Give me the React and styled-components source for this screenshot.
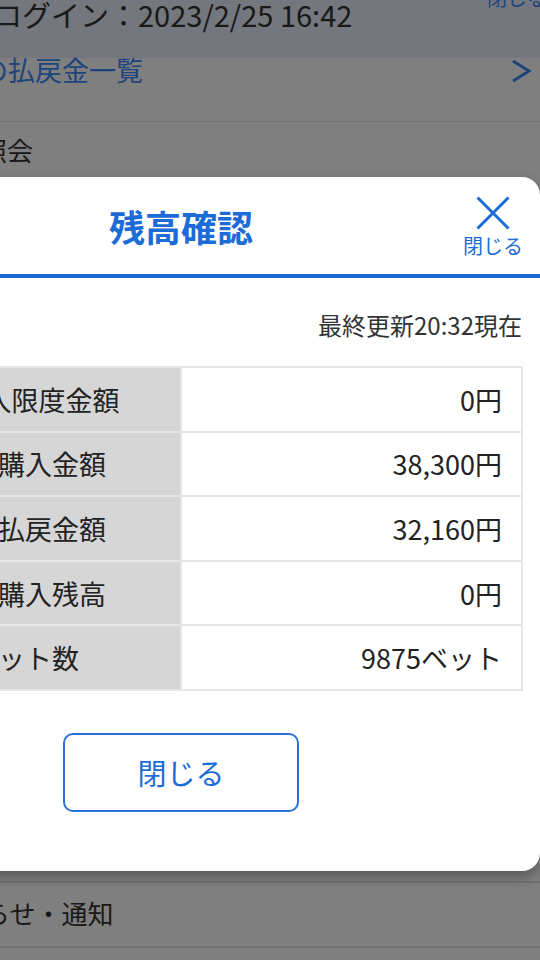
import styled, { createGlobalStyle } from "styled-components";

const GlobalStyle = createGlobalStyle`
  html, body {
    margin: 0;
    padding: 0;
    background: #ffffff;
    overflow: hidden;
  }
  body {
    font-family: "Noto Sans CJK JP", "Noto Sans", sans-serif;
    color: #333333;
  }
`;

const BLUE = "#1c6cd8";

const rows = [
  { label: "総購入限度金額", value: "0円" },
  { label: "本日購入金額", value: "38,300円" },
  { label: "本日払戻金額", value: "32,160円" },
  { label: "本日購入残高", value: "0円" },
  { label: "ベット数", value: "9875ベット" },
];

function CloseIcon() {
  return (
    <svg width="34" height="34" viewBox="0 0 34 34">
      <path d="M1.5 1.5 L32.5 32.5 M32.5 1.5 L1.5 32.5" stroke={BLUE} strokeWidth="3" fill="none" />
    </svg>
  );
}

function Chevron() {
  return (
    <ChevronSvg width="22" height="24" viewBox="0 0 22 24">
      <path d="M3 2 L19 12 L3 22" stroke="#3d8af7" strokeWidth="3" fill="none" />
    </ChevronSvg>
  );
}

function App() {
  return (
    <>
      <GlobalStyle />
      <Screen>
        <Page>
          <TopBar>
            <LoginInfo>前回ログイン：2023/2/25 16:42</LoginInfo>
            <TopClose>閉じる</TopClose>
          </TopBar>
          <MenuLink>
            <LinkText>本日の払戻金一覧</LinkText>
            <Chevron />
          </MenuLink>
          <Section $height={761}>
            <SectionTitle $shift={-71}>残高照会</SectionTitle>
          </Section>
          <Section $height={65}>
            <SectionTitle $shift={-68} $top={15}>お知らせ・通知</SectionTitle>
          </Section>
        </Page>
        <Backdrop />
        <Modal>
          <ModalHeader>
            <Title>残高確認</Title>
            <CloseButton>
              <CloseIcon />
              <CloseLabel>閉じる</CloseLabel>
            </CloseButton>
          </ModalHeader>
          <ModalBody>
            <Updated>最終更新20:32現在</Updated>
            <BalanceTable>
              <tbody>
                {rows.map((row) => (
                  <tr key={row.label}>
                    <LabelCell>{row.label}</LabelCell>
                    <ValueCell>{row.value}</ValueCell>
                  </tr>
                ))}
              </tbody>
            </BalanceTable>
            <CloseWide>閉じる</CloseWide>
          </ModalBody>
        </Modal>
      </Screen>
    </>
  );
}

export default App;

const Screen = styled.div`
  position: relative;
  width: 540px;
  height: 960px;
  overflow: hidden;
`;

const Page = styled.div`
  display: flex;
  flex-direction: column;
  width: 540px;
`;

const TopBar = styled.div`
  display: flex;
  justify-content: space-between;
  align-items: flex-start;
  height: 58px;
  background: #e9effd;
  overflow: hidden;
`;

const LoginInfo = styled.span`
  font-size: 29px;
  line-height: 32px;
  margin-top: -2px;
  margin-left: -65px;
  white-space: nowrap;
  color: #333333;
`;

const TopClose = styled.span`
  font-size: 20px;
  line-height: 22px;
  margin-top: -13px;
  margin-right: -7px;
  color: #3d8af7;
  white-space: nowrap;
`;

const MenuLink = styled.div`
  display: flex;
  align-items: flex-start;
  height: 63px;
  border-bottom: 1px solid #e4e4e4;
`;

const LinkText = styled.span`
  font-size: 27px;
  line-height: 30px;
  margin-top: -3px;
  margin-left: -73px;
  white-space: nowrap;
  color: #3d8af7;
`;

const ChevronSvg = styled.svg`
  margin-left: auto;
  margin-right: 8px;
  margin-top: 1px;
`;

const Section = styled.div`
  height: ${(p) => p.$height}px;
  box-sizing: border-box;
  border-bottom: 2px solid #e4e4e4;
`;

const SectionTitle = styled.div`
  font-size: 26px;
  line-height: 30px;
  margin-top: ${(p) => p.$top ?? 13}px;
  margin-left: ${(p) => p.$shift}px;
  white-space: nowrap;
  color: #333333;
`;

const Backdrop = styled.div`
  position: absolute;
  inset: 0;
  background: rgba(0, 0, 0, 0.5);
`;

const Modal = styled.div`
  position: absolute;
  top: 177px;
  left: -178px;
  width: 718px;
  background: #ffffff;
  border-radius: 18px;
  box-shadow: 0 6px 14px rgba(0, 0, 0, 0.3);
  display: flex;
  flex-direction: column;
`;

const ModalHeader = styled.div`
  display: grid;
  grid-template-columns: 1fr auto 1fr;
  align-items: center;
  height: 97px;
  border-bottom: 4px solid #1a68d4;
`;

const Title = styled.h2`
  grid-column: 2;
  margin: 0;
  font-size: 36px;
  line-height: 42px;
  font-weight: 700;
  color: ${BLUE};
`;

const CloseButton = styled.div`
  grid-column: 3;
  justify-self: end;
  display: flex;
  flex-direction: column;
  align-items: center;
  padding-right: 17px;
  padding-top: 2px;
`;

const CloseLabel = styled.span`
  margin-top: 5px;
  font-size: 20px;
  line-height: 22px;
  color: ${BLUE};
`;

const ModalBody = styled.div`
  display: flex;
  flex-direction: column;
  padding: 32px 17px 59px;
`;

const Updated = styled.div`
  text-align: right;
  font-size: 24px;
  line-height: 30px;
  padding-right: 1px;
  color: #333333;
`;

const BalanceTable = styled.table`
  margin-top: 26px;
  width: 100%;
  border-collapse: collapse;
  border: 2px solid #e4e4e4;
  font-size: 27px;
  color: #222222;

  tr {
    height: 64.6px;
  }
`;

const LabelCell = styled.td`
  width: 50%;
  padding: 0 0 0 29px;
  background: #d6d6d6;
  border: 2px solid #e6e6e6;
  text-align: center;
  white-space: nowrap;
`;

const ValueCell = styled.td`
  padding: 0 19px 0 0;
  background: #ffffff;
  border: 2px solid #e6e6e6;
  text-align: right;
  white-space: nowrap;
`;

const CloseWide = styled.button`
  align-self: center;
  margin-top: 42px;
  width: 236px;
  height: 79px;
  background: #ffffff;
  border: 2px solid #2a72da;
  border-radius: 10px;
  font-family: inherit;
  font-size: 29px;
  color: ${BLUE};
  cursor: pointer;
`;
